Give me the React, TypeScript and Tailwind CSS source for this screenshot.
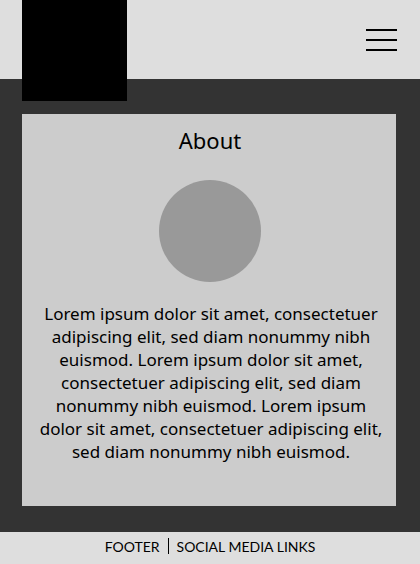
export default function App() {
  return (
    <div className="flex min-h-screen flex-col bg-[#333333] font-['Noto_Sans','Open_Sans',sans-serif] text-black">
      <header className="flex h-[79px] items-start justify-between bg-[#dedede] pr-[23px] pl-[22px]">
        <a href="#home" aria-label="Home" className="relative z-10 block h-[101px] w-[105px] bg-black"></a>
        <button type="button" aria-label="Menu" className="mt-[29px] flex flex-col gap-2">
          <span className="h-0.5 w-[31px] bg-black"></span>
          <span className="h-0.5 w-[31px] bg-black"></span>
          <span className="h-0.5 w-[31px] bg-black"></span>
        </button>
      </header>
      <main className="flex grow flex-col pt-[35px] pr-6 pb-[26px] pl-[22px]">
        <section className="flex grow flex-col items-center bg-[#cccccc] pt-[10px] pr-2 pb-10 pl-[10px] text-center">
          <h1 className="text-[22px] leading-8">About</h1>
          <div className="mt-6 size-[102px] rounded-full bg-[#999999]"></div>
          <p className="mt-5 pl-[2px] text-[17px] leading-[23px]">
            Lorem ipsum dolor sit amet, consectetuer<br />
            adipiscing elit, sed diam nonummy nibh<br />
            euismod. Lorem ipsum dolor sit amet,<br />
            consectetuer adipiscing elit, sed diam<br />
            nonummy nibh euismod. Lorem ipsum<br />
            dolor sit amet, consectetuer adipiscing elit,<br />
            sed diam nonummy nibh euismod.
          </p>
        </section>
      </main>
      <footer className="flex h-8 items-center justify-center gap-2 bg-[#dedede] pb-1 font-['Lato',sans-serif] text-[14px]">
        <span>FOOTER</span>
        <span className="h-4 w-px bg-black"></span>
        <span>SOCIAL MEDIA LINKS</span>
      </footer>
    </div>
  );
}
